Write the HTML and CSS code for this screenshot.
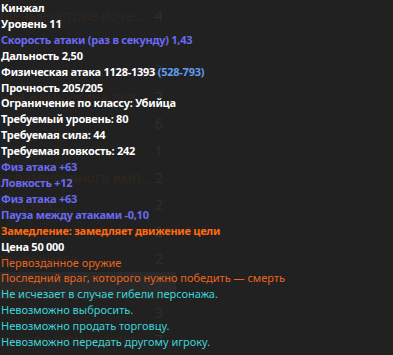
FILE: index.html
```html
<!DOCTYPE html>
<html>
<head>
  <title>Кинжал</title>
  <link rel="stylesheet" href="styles.css">
</head>
<body>
  <!-- список предметов под подсказкой -->
  <div class="item-list">
    <div class="item-row"><span class="item-name">шеные острие исче...</span><span class="item-count">4</span></div>
    <div class="item-row"><span class="item-name"></span><span class="item-count"></span></div>
    <div class="item-row"><span class="item-name"></span><span class="item-count">2</span></div>
    <div class="item-row"><span class="item-name">ная жемчужина дев...</span><span class="item-count">7</span></div>
    <div class="item-row"><span class="item-name"></span><span class="item-count">6</span></div>
    <div class="item-row"><span class="item-name"></span><span class="item-count">1</span></div>
    <div class="item-row"><span class="item-name">ы разверенного имп...</span><span class="item-count">2</span></div>
    <div class="item-row"><span class="item-name">с музык...</span><span class="item-count">2</span></div>
    <div class="item-row"><span class="item-name"></span><span class="item-count">2</span></div>
    <div class="item-row"><span class="item-name">ие феникса</span><span class="item-count">2</span></div>
    <div class="item-row selected"><span class="item-name">ереза</span><span class="item-count">2</span></div>
    <div class="item-row"><span class="item-name"></span><span class="item-count">3</span></div>
    <div class="item-row"><span class="item-name">таки воспоминания</span><span class="item-count">7</span></div>
  </div>

  <div class="tooltip">
    <div class="line white">Кинжал</div>
    <div class="line white">Уровень 11</div>
    <div class="line purple">Скорость атаки (раз в секунду) 1,43</div>
    <div class="line white">Дальность 2,50</div>
    <div class="line white">Физическая атака 1128-1393 <span class="blue">(528-793)</span></div>
    <div class="line white">Прочность 205/205</div>
    <div class="line white">Ограничение по классу: Убийца</div>
    <div class="line white">Требуемый уровень: 80</div>
    <div class="line white">Требуемая сила: 44</div>
    <div class="line white">Требуемая ловкость: 242</div>
    <div class="line purple">Физ атака +63</div>
    <div class="line purple">Ловкость +12</div>
    <div class="line purple">Физ атака +63</div>
    <div class="line purple">Пауза между атаками -0,10</div>
    <div class="line orange">Замедление: замедляет движение цели</div>
    <div class="line white">Цена 50 000</div>
    <div class="line rust">Первозданное оружие</div>
    <div class="line rust">Последний враг, которого нужно победить — смерть</div>
    <div class="line cyan">Не исчезает в случае гибели персонажа.</div>
    <div class="line cyan">Невозможно выбросить.</div>
    <div class="line cyan">Невозможно продать торговцу.</div>
    <div class="line cyan">Невозможно передать другому игроку.</div>
  </div>
</body>
</html>
```

FILE: styles.css
```css
body {
  margin: 0;
  background-color: #212121;
  font-family: "Noto Sans", sans-serif;
  position: relative;
  height: 355px;
  overflow: hidden;
}

/* список под подсказкой */
.item-list {
  padding-top: 2px;
}

.item-row {
  display: flex;
  align-items: center;
  height: 27px;
  width: 176px;
  font-size: 14px;
}

.item-row.selected {
  background-color: #292929;
}

.item-name {
  width: 155px;
  color: #30261f;
  white-space: nowrap;
  overflow: hidden;
}

.item-count {
  color: #263036;
}

/* подсказка предмета */
.tooltip {
  position: absolute;
  top: 0;
  left: 1px;
  font-size: 11px;
  line-height: 15.9px;
}

.line {
  white-space: nowrap;
}

.white,
.purple,
.orange {
  font-weight: bold;
  letter-spacing: -0.25px;
}

.white {
  color: #ffffff;
}

.purple {
  color: #6a6af2;
}

.blue {
  color: #5f9cf0;
}

.orange {
  color: #ff6a10;
}

.rust {
  color: #e8641e;
}

.cyan {
  color: #3cd4d8;
}
```
